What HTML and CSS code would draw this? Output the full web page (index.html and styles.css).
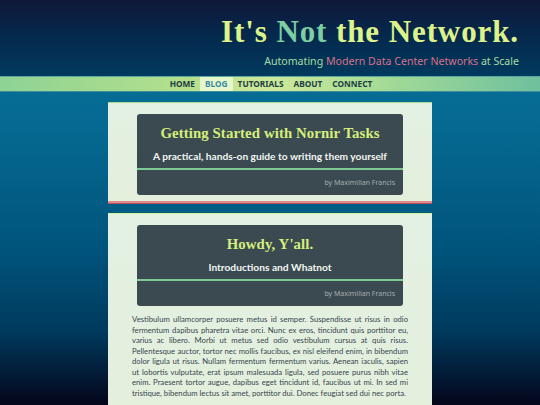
FILE: index.html
```html
<!DOCTYPE html>
<html>
<head>
<meta charset="utf-8">
<link rel="stylesheet" href="styles.css">
</head>
<body>
<header class="masthead">
  <h1 class="site-title">It's <span class="accent">Not</span> the Network.</h1>
  <p class="tagline">Automating <span class="hl">Modern Data Center Networks</span> at Scale</p>
</header>
<nav class="nav">
  <a class="nav-item">HOME</a>
  <a class="nav-item active">BLOG</a>
  <a class="nav-item">TUTORIALS</a>
  <a class="nav-item">ABOUT</a>
  <a class="nav-item">CONNECT</a>
</nav>
<main class="main">
  <article class="card first">
    <div class="post-head">
      <h2 class="post-title">Getting Started with Nornir Tasks</h2>
      <p class="post-sub">A practical, hands-on guide to writing them yourself</p>
      <div class="post-meta">by Maximilian Francis</div>
    </div>
  </article>
  <article class="card second">
    <div class="post-head">
      <h2 class="post-title">Howdy, Y'all.</h2>
      <p class="post-sub">Introductions and Whatnot</p>
      <div class="post-meta">by Maximilian Francis</div>
    </div>
    <p class="post-body">Vestibulum ullamcorper posuere metus id semper. Suspendisse ut risus in odio fermentum dapibus pharetra vitae orci. Nunc ex eros, tincidunt quis porttitor eu, varius ac libero. Morbi ut metus sed odio vestibulum cursus at quis risus. Pellentesque auctor, tortor nec mollis faucibus, ex nisl eleifend enim, in bibendum dolor ligula ut risus. Nullam fermentum fermentum varius. Aenean iaculis, sapien ut lobortis vulputate, erat ipsum malesuada ligula, sed posuere purus nibh vitae enim. Praesent tortor augue, dapibus eget tincidunt id, faucibus ut mi. In sed mi tristique, bibendum lectus sit amet, porttitor dui. Donec feugiat sed dui nec porta.</p>
  </article>
</main>
</body>
</html>
```
FILE: styles.css
```css
html, body {
  margin: 0;
  padding: 0;
  height: 405px;
  overflow: hidden;
}
body {
  font-family: "Noto Sans", "Open Sans", sans-serif;
  background: linear-gradient(180deg, #0a739a 0px, #066a92 120px, #00547c 250px, #003a5e 330px, #04051a 405px);
}
.masthead {
  height: 76px;
  box-sizing: border-box;
  background: linear-gradient(180deg, #0f1838 0%, #05284c 45%, #003a5e 100%);
  text-align: right;
  padding: 13px 21px 0 0;
}
.site-title {
  margin: 0;
  font-family: "Liberation Serif", serif;
  font-weight: 700;
  font-size: 31px;
  line-height: 38px;
  color: #def28a;
  letter-spacing: 0.9px;
}
.site-title .accent { color: #7ccfa2; }
.tagline {
  margin: 2px 0 0;
  font-size: 10.6px;
  line-height: 16px;
  color: #a6dca0;
}
.tagline .hl { color: #d8708a; }
.nav {
  height: 16px;
  box-sizing: border-box;
  border-top: 1px solid #5aa6a0;
  border-bottom: 1px solid #3f8e9a;
  background: linear-gradient(90deg, #8ed394 0%, #b4e08c 35%, #cfe99a 50%, #a6dc96 70%, #6fc09e 100%);
  display: flex;
  justify-content: center;
  padding-left: 2px;
}
.nav-item {
  font-size: 8.3px;
  font-weight: bold;
  color: #1d3e44;
  line-height: 14px;
  padding: 0 5px;
}
.nav-item.active {
  background: #e6f6cc;
  color: #3d8ba2;
}
.main {
  width: 324px;
  margin: 10px auto 0;
  display: flex;
  flex-direction: column;
  gap: 10px;
}
.card {
  background: linear-gradient(180deg, #e3f1e3 0%, #e4efdc 100%);
  border-top: 1px solid #a6dc92;
  padding: 11px 29px 6px;
}
.card.first {
  border-bottom: 2px solid #e48a8c;
  box-shadow: 0 1px 0 #b05060;
}
.card.second {
  border-top-color: #d2f4a0;
  padding-bottom: 20px;
}
.post-head {
  background: #3b4a50;
  border-radius: 3px;
  text-align: center;
  overflow: hidden;
}
.post-title {
  margin: 0;
  padding: 8px 0 0;
  font-family: "Liberation Serif", serif;
  font-weight: 700;
  font-size: 14.8px;
  line-height: 22px;
  color: #d6ef7c;
  letter-spacing: 0.1px;
}
.post-sub {
  margin: 0;
  padding: 1px 0 1px;
  font-family: "Lato", "Noto Sans", sans-serif;
  font-size: 10.2px;
  font-weight: 700;
  color: #f2f6f2;
  line-height: 22px;
  border-bottom: 2px solid #7ec994;
}
.post-meta {
  text-align: right;
  font-size: 7px;
  color: #a3acaf;
  padding: 0 8px;
  line-height: 25px;
}
.post-body {
  margin: 8px -5px 0;
  font-family: "Lato", "Noto Sans", sans-serif;
  font-size: 7.7px;
  line-height: 10.5px;
  color: #37474f;
  text-align: justify;
}
```
